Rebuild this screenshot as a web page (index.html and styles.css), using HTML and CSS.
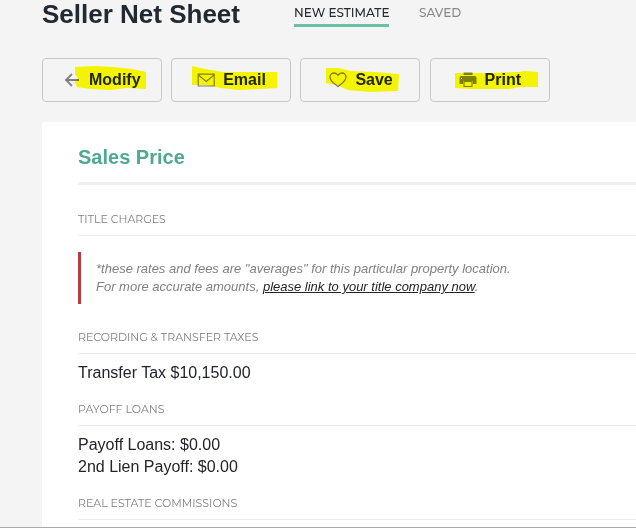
FILE: index.html
```
<!DOCTYPE html>
<html lang="en">
<head>
  <meta charset="UTF-8">
  <meta name="viewport" content="width=device-width, initial-scale=1.0">
  <title>Seller Net Sheet</title>
  <link rel="stylesheet" href="styles.css">
</head>
<body>

<header>
  <h1>Seller Net Sheet</h1>
  <nav class="tabs">
    <a class="tab active">NEW ESTIMATE</a>
    <a class="tab">SAVED</a>
  </nav>
</header>

<div class="actions">
  <button class="modify">
    <svg class="icon" width="16" height="16" viewBox="0 0 16 16"><path d="M15 8H2M8 2L2 8l6 6" fill="none" stroke="#808080" stroke-width="1.8"/></svg>
    <span>Modify</span>
    <svg class="marker" width="120" height="44" viewBox="0 0 120 44"><path d="M33 9L52 8 72 9 90 11 104 14 104 31 85 30 68 32 48 31 35 29 33 25 36 20 33 16Z"/></svg>
  </button>
  <button class="email">
    <svg class="icon" width="18" height="14" viewBox="0 0 18 14"><path d="M1.2 1.2h16v11.8h-16zM1.400 2l7.800 6.500L17 2" fill="none" stroke="#808080" stroke-width="1.2"/></svg>
    <span>Email</span>
    <svg class="marker" width="120" height="44" viewBox="0 0 120 44"><path d="M21 8L34 11 52 14 106 14 106 30 90 31 68 32 50 30 34 27 21 27Z"/></svg>
  </button>
  <button class="save">
    <svg class="icon" width="18" height="16" viewBox="0 0 18 16"><path d="M9 14.6C7.5 13 1 9.500 1 5.200 1 2.600 2.900 1 5 1c1.800 0 3.200.9 4 2.300C9.800 1.900 11.200 1 13 1c2.100 0 4 1.600 4 4.200 0 4.300-6.500 7.800-8 9.400z" fill="none" stroke="#808080" stroke-width="1.3"/></svg>
    <span>Save</span>
    <svg class="marker" width="120" height="44" viewBox="0 0 120 44"><path d="M26 10L38 10 51 13 75 14 99 16 98 33 70 34 48 32 37 27 26 25Z"/></svg>
  </button>
  <button class="print">
    <svg class="icon" width="18" height="16" viewBox="0 0 18 16"><path fill="#808080" fill-rule="evenodd" d="M4.500.5h9V3h-9zM2.200 4h13.600Q17.500 4 17.500 5.700V12H14V9H4v3H.5V5.700Q.5 4 2.200 4zM2 6v1h1V6z"/><path d="M5 9.500h8v5H5z" fill="none" stroke="#808080" stroke-width="1.2"/></svg>
    <span>Print</span>
    <svg class="marker" width="120" height="44" viewBox="0 0 120 44"><path d="M25 15L60 15 88 14 95 13 108 14 108 29 89 29 80 31 40 31 25 30Z"/></svg>
  </button>
</div>

<main>
  <h2>Sales Price</h2>

  <h3 class="title-charges">TITLE CHARGES</h3>
  <blockquote>
    *these rates and fees are "averages" for this particular property location.<br>
    For more accurate amounts, <a>please link to your title company now</a>.
  </blockquote>

  <h3>RECORDING &amp; TRANSFER TAXES</h3>
  <p>Transfer Tax $10,150.00</p>

  <h3 class="payoff">PAYOFF LOANS</h3>
  <p>Payoff Loans: $0.00<br>2nd Lien Payoff: $0.00</p>

  <h3 class="commissions">REAL ESTATE COMMISSIONS</h3>
</main>

</body>
</html>
```
FILE: styles.css
```
* {
  box-sizing: border-box;
}
body {
  font-family: "Liberation Sans", Arial, sans-serif;
  margin: 0;
  height: 528px;
  display: flex;
  flex-direction: column;
  background: #f4f4f4;
  border-bottom: 1px solid #aaa;
  color: #212529;
  overflow: hidden;
}
h1, h2, h3, p, blockquote {
  margin: 0;
}
header {
  display: flex;
  align-items: flex-start;
  height: 58px;
  padding-left: 42px;
}
h1 {
  width: 252px;
  font-size: 26px;
  line-height: 28px;
  color: #212a32;
}
.tabs {
  display: flex;
  gap: 30px;
}
.tab {
  height: 27px;
  padding-top: 4px;
  font-family: Montserrat, Inter, sans-serif;
  font-size: 12px;
  font-weight: 500;
  line-height: 18px;
  color: #888;
  white-space: nowrap;
}
.tab.active {
  width: 95px;
  color: #212a32;
  border-bottom: 3px solid #6bbfa8;
}
.actions {
  display: flex;
  gap: 9.2px;
  padding-left: 42px;
}
.actions button {
  position: relative;
  display: flex;
  align-items: center;
  width: 120px;
  height: 44px;
  padding: 0 0 0 25px;
  background: #f4f4f4;
  border: 1px solid #c8c8c8;
  border-radius: 4px;
  font-family: inherit;
  font-size: 16px;
  font-weight: bold;
  color: #212529;
}
.actions button.modify {
  padding-left: 21px;
}
.actions button.save,
.actions button.print {
  padding-left: 28px;
}
.icon {
  flex: none;
  margin-right: 8px;
}
.modify .icon {
  margin-right: 9px;
}
/* highlighter strokes over the buttons */
.marker {
  position: absolute;
  top: -1px;
  left: -1px;
  fill: #ffff00;
  mix-blend-mode: multiply;
}
main {
  flex: 1;
  margin: 20px 0 0 42px;
  padding: 20px 0 0 36px;
  background: #fff;
}
h2 {
  height: 43px;
  border-bottom: 3px solid #f0f0f0;
  font-size: 20px;
  line-height: 30px;
  color: #4fa893;
}
h3 {
  height: 26px;
  border-bottom: 1px solid #ececec;
  font-family: Montserrat, Inter, sans-serif;
  font-size: 11px;
  font-weight: 400;
  line-height: 18px;
  color: #808080;
}
.title-charges {
  margin-top: 25px;
}
blockquote {
  height: 52px;
  margin: 16px 0 24px;
  padding: 8px 0 0 15px;
  border-left: 3px solid #b93a40;
  font-size: 13px;
  font-style: italic;
  line-height: 18px;
  color: #808080;
}
blockquote a {
  color: #212529;
  text-decoration: underline;
}
p {
  padding-top: 8px;
  font-size: 16px;
  line-height: 22px;
}
.payoff,
.commissions {
  margin-top: 16px;
}
```
